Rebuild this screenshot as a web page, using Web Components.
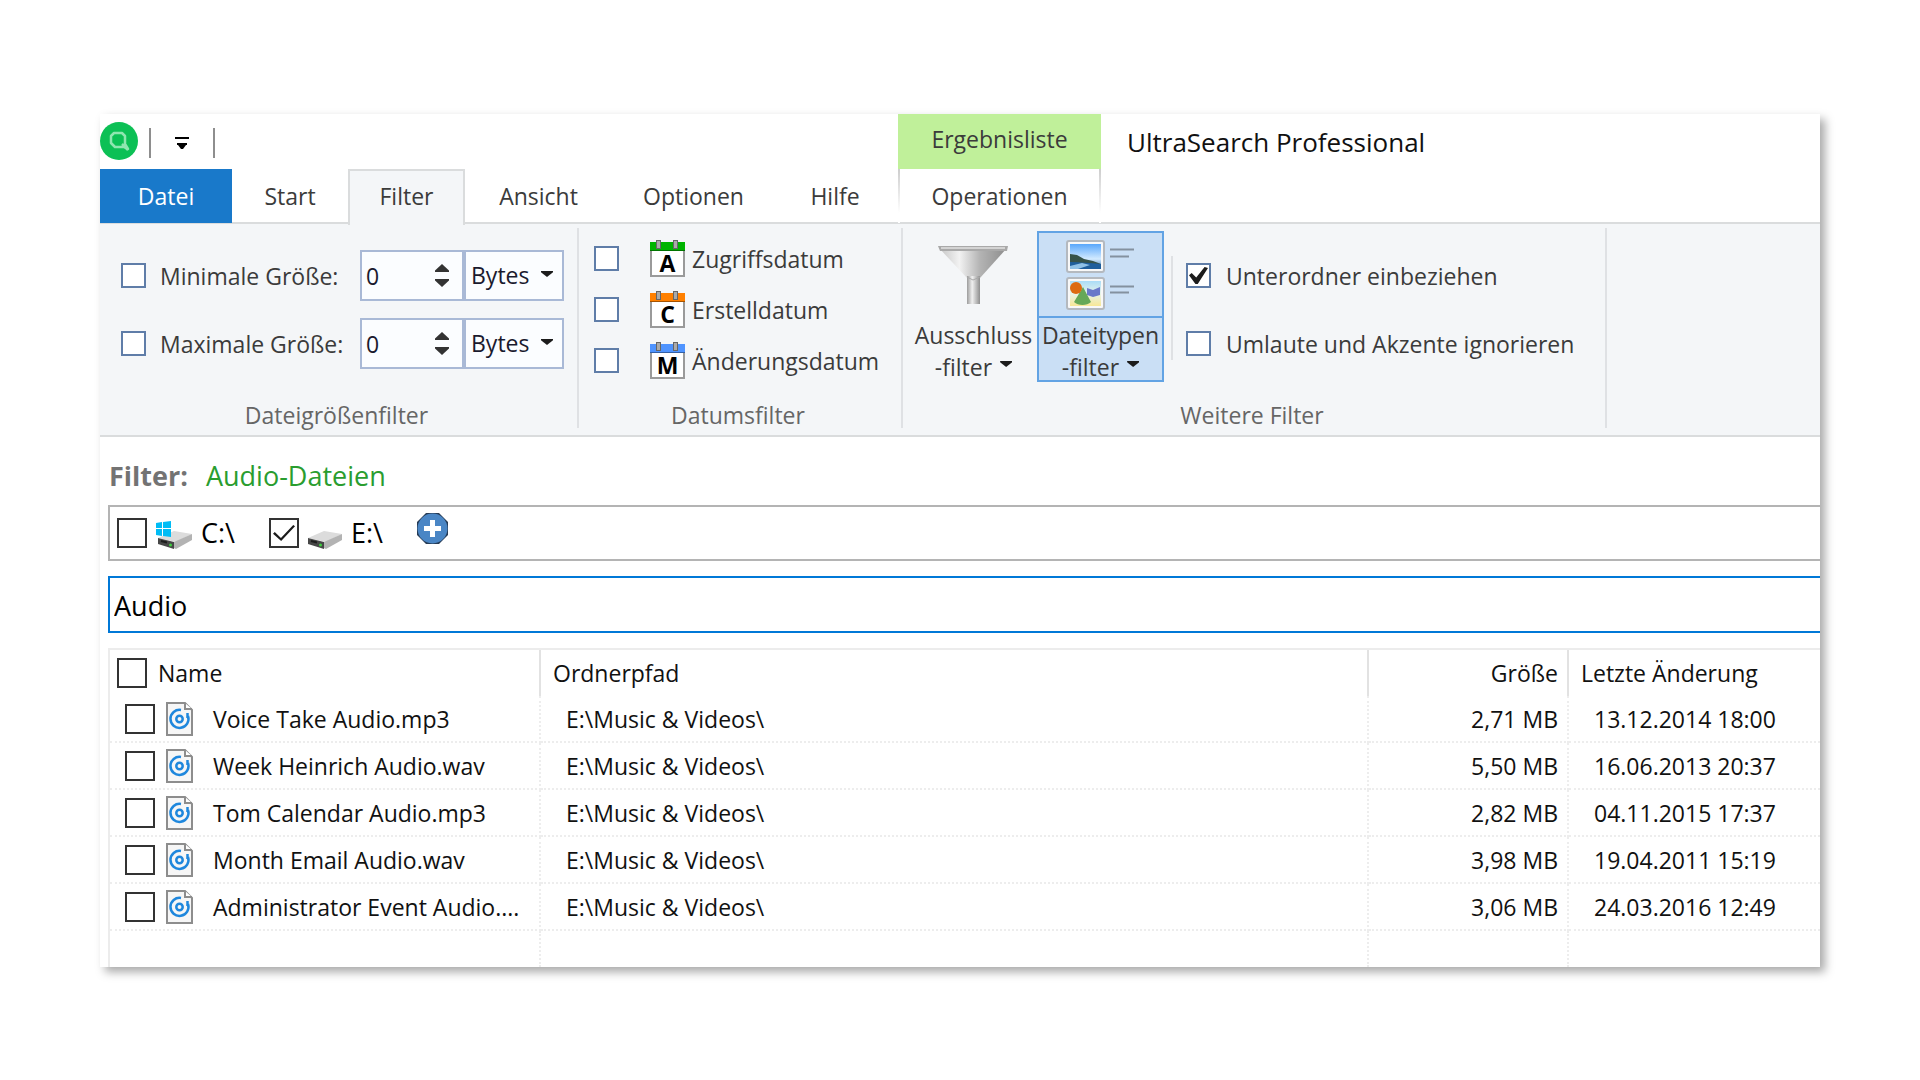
<!DOCTYPE html>
<html lang="de">
<head>
<meta charset="utf-8">
<title>UltraSearch Professional</title>
<style>
	body {
		margin: 0;
		padding: 114px 100px 112px;
		background: #fff;
		font-family: "Open Sans", "Noto Sans", sans-serif;
		font-size: 23px;
		line-height: 32px;
		color: #3b3b3b;
	}
</style>
</head>
<body>

<app-window>
	<title-bar slot="title" context="Ergebnisliste">UltraSearch Professional</title-bar>
	<ribbon-tabs slot="tabs"></ribbon-tabs>

	<ribbon-group caption="Dateigrößenfilter" class="size">
		<size-filter label="Minimale Größe:"></size-filter>
		<size-filter label="Maximale Größe:"></size-filter>
	</ribbon-group>
	<ribbon-group caption="Datumsfilter" class="date">
		<check-option icon="cal-a">Zugriffsdatum</check-option>
		<check-option icon="cal-c">Erstelldatum</check-option>
		<check-option icon="cal-m">Änderungsdatum</check-option>
	</ribbon-group>
	<ribbon-group caption="Weitere Filter" class="more">
		<ribbon-button icon="funnel" first="Ausschluss" second="-filter"></ribbon-button>
		<ribbon-button icon="filetypes" first="Dateitypen" second="-filter" active></ribbon-button>
		<option-list>
			<check-option checked>Unterordner einbeziehen</check-option>
			<check-option>Umlaute und Akzente ignorieren</check-option>
		</option-list>
	</ribbon-group>

	<filter-status slot="content" name="Audio-Dateien"></filter-status>
	<drive-bar slot="content"></drive-bar>
	<search-box slot="content" value="Audio"></search-box>
	<result-table slot="content"></result-table>
</app-window>

<script>
// calendar sheet with a coloured head and a letter
const calendar = (color, letter) => `
	<svg width="37" height="38" viewBox="0 0 37 38" aria-hidden="true">
		<rect x="2" y="3" width="33" height="33" fill="#fff" stroke="#9a9a9a" stroke-width="2"/>
		<rect x="1" y="2" width="35" height="9" fill="${color}"/>
		<path d="M1 10.500h35" stroke="#000" stroke-opacity=".35"/>
		<rect x="7.500" y=".5" width="4" height="8" fill="#aaa" stroke="#666"/>
		<rect x="24.500" y=".5" width="4" height="8" fill="#aaa" stroke="#666"/>
		<text x="18.500" y="32" text-anchor="middle" font-family="Open Sans, sans-serif" font-weight="700" font-size="23" fill="#000">${letter}</text>
	</svg>`

const ICONS = {
	logo: `
	<svg width="38" height="38" viewBox="0 0 38 38" aria-hidden="true">
		<circle cx="19" cy="19" r="19" fill="#0cc055"/>
		<path d="M14 11h8l3 3v8l3 5-4-2h-9l-4-4v-7z" fill="none" stroke="#8fe6b0" stroke-width="2.500" stroke-linejoin="round"/>
		<path d="M22 22l6 6" stroke="#8fe6b0" stroke-width="2.500"/>
	</svg>`,
	'cal-a': calendar('#00b400', 'A'),
	'cal-c': calendar('#ff8000', 'C'),
	'cal-m': calendar('#4f94ff', 'M'),
	funnel: `
	<svg width="70" height="60" viewBox="0 0 70 60" aria-hidden="true">
		<defs>
			<linearGradient id="cone"><stop offset="0" stop-color="#c4c4c4"/><stop offset=".3" stop-color="#f2f2f2"/><stop offset=".6" stop-color="#b4b4b4"/><stop offset="1" stop-color="#8c8c8c"/></linearGradient>
			<linearGradient id="pipe"><stop offset="0" stop-color="#9c9c9c"/><stop offset=".4" stop-color="#f0f0f0"/><stop offset="1" stop-color="#8e8e8e"/></linearGradient>
		</defs>
		<path d="M1 3h68l-27 30H29z" fill="url(#cone)"/>
		<path d="M29 31h13v28H29z" fill="url(#pipe)"/>
		<path d="M29 32l6 3 7-3" fill="none" stroke="#aaa"/>
		<path d="M0 1h70l-1 5H2z" fill="#a9a9a9"/>
		<path d="M3 3h64" stroke="#e2e2e2" stroke-width="1.500"/>
	</svg>`,
	filetypes: `
	<svg width="68" height="70" viewBox="0 0 68 70" aria-hidden="true">
		<defs>
			<linearGradient id="sky" x2="0" y2="1"><stop offset="0" stop-color="#5aa7fb"/><stop offset=".6" stop-color="#d3ebff"/><stop offset="1" stop-color="#2b69a8"/></linearGradient>
			<linearGradient id="sand" x2="0" y2="1"><stop offset="0" stop-color="#aadcf7"/><stop offset=".5" stop-color="#e8f4ea"/><stop offset="1" stop-color="#f8e795"/></linearGradient>
		</defs>
		<rect x="1" y="1" width="37" height="31" rx="2" fill="#f8f8f8" stroke="#b4b9bf" stroke-width="2"/>
		<rect x="4" y="4" width="31" height="25" fill="url(#sky)"/>
		<path d="M4 14l7 1 7 4 9 2 8 3H4z" fill="#36534a"/>
		<path d="M4 22c11 0 20 1 31 2v5H4z" fill="#1f5f9c"/>
		<path d="M4 26l12-3 8 2-12 4H4z" fill="#8fc1e6"/>
		<rect x="1" y="38" width="37" height="31" rx="2" fill="#f8f8f8" stroke="#b4b9bf" stroke-width="2"/>
		<rect x="4" y="41" width="31" height="25" fill="url(#sand)"/>
		<path d="M21 48l6 2 7-3v8l-7 2-6-2z" fill="#6a79c9"/>
		<path d="M17 47l8 15c-4 4-13 4-17 0z" fill="#66a857"/>
		<circle cx="10" cy="48" r="6" fill="#dd6a10"/>
		<path d="M44 9.500h24M44 46.500h24" stroke="#84919f" stroke-width="2"/>
		<path d="M44 16.500h19M44 52.500h19" stroke="#84919f" stroke-width="2"/>
	</svg>`,
	drive: `
	<svg width="36" height="30" viewBox="0 0 36 30" aria-hidden="true">
		<path d="M1 18L17 11l18 3-16 8z" fill="#dcdcdc"/>
		<path d="M17 22l18-8v6l-16 9-2-1z" fill="#b3b3b3"/>
		<path d="M1 18l16 4v7L1 24z" fill="#474747"/>
		<path d="M4 21l6 1.500" stroke="#1d1d1d" stroke-width="2"/>
		<circle cx="13.500" cy="25" r="1.500" fill="#3fd13f"/>
	</svg>`,
	system: `
	<svg width="38" height="30" viewBox="0 0 38 30" aria-hidden="true">
		<path d="M3 18L19 11l18 3-16 8z" fill="#dcdcdc"/>
		<path d="M19 22l18-8v6l-16 9-2-1z" fill="#b3b3b3"/>
		<path d="M3 18l16 4v7L3 24z" fill="#474747"/>
		<path d="M6 21l6 1.500" stroke="#1d1d1d" stroke-width="2"/>
		<circle cx="15.500" cy="25" r="1.500" fill="#3fd13f"/>
		<path d="M1 3l6-1v6H1zM8 2l8-1v7H8zM1 9h6v7l-6-1zM8 9h8v8l-8-1z" fill="#00bcf5"/>
	</svg>`,
	plus: `
	<svg width="31" height="31" viewBox="0 0 31 31" aria-hidden="true">
		<path d="M9 0h13l9 9v13l-9 9H9l-9-9V9z" fill="#263b55"/>
		<circle cx="15.500" cy="15.500" r="15" fill="#4a86c5"/>
		<path d="M15.500 7v17M7 15.500h17" stroke="#fff" stroke-width="5"/>
	</svg>`,
	audio: `
	<svg width="27" height="34" viewBox="0 0 27 34" aria-hidden="true">
		<path d="M1 1h18l7 7v25H1z" fill="#f6f6f6" stroke="#8d8d8d" stroke-width="2"/>
		<path d="M19 1v6h7" fill="#fff" stroke="#8d8d8d" stroke-width="2"/>
		<path d="M22 14a9 9 0 1 1-7-6" fill="none" stroke="#1e87dd" stroke-width="2.500"/>
		<path d="M21.500 11v5" stroke="#1e87dd" stroke-width="2.500"/>
		<circle cx="13.500" cy="17" r="3.200" fill="none" stroke="#1e87dd" stroke-width="2.500"/>
	</svg>`
}

// tick boxes are shared by several shadow roots
const CHECKBOX = `
	input[type=checkbox] {
		appearance: none;
		flex: none;
		display: grid;
		place-items: center;
		box-sizing: border-box;
		width: 25px;
		height: 25px;
		margin: 0;
		border: 2px solid #5f7da8;
		background: #fff;
	}
	input[type=checkbox].large {
		width: 30px;
		height: 30px;
		border-color: #333;
	}
	input:checked::before {
		content: "";
		width: 19px;
		height: 17px;
		background: #1c1c1c;
		clip-path: polygon(0 48%, 14% 36%, 38% 62%, 82% 0, 100% 6%, 46% 100%, 34% 100%);
	}
	input.large:checked::before {
		width: 22px;
		height: 16px;
		clip-path: polygon(0 54%, 8% 44%, 36% 82%, 92% 0, 100% 8%, 37% 100%);
	}`

class AppWindow extends HTMLElement {
	constructor() {
		super();
		this.attachShadow({ mode: 'open' });
		this.shadowRoot.innerHTML = `
		<style>
			:host {
				display: block;
				background: #fff;
				box-shadow: 5px 5px 9px rgba(0,0,0,0.34);
			}
			.ribbon {
				display: flex;
				padding: 4px 0 7px;
				background: #f4f6f8;
				border-bottom: 2px solid #dadcdd;
			}
			main {
				padding-left: 8px;
			}
		</style>
		<slot name="title"></slot>
		<slot name="tabs"></slot>
		<div class="ribbon"><slot></slot></div>
		<main><slot name="content"></slot></main>
		`
	}
}
customElements.define('app-window', AppWindow);

class TitleBar extends HTMLElement {
	constructor() {
		super();
		this.attachShadow({ mode: 'open' });
		this.shadowRoot.innerHTML = `
		<style>
			:host {
				display: flex;
				height: 55px;
			}
			.quick {
				display: flex;
				align-items: center;
				width: 798px;
				height: 53px;
			}
			.quick svg {
				display: block;
			}
			.quick button {
				display: grid;
				place-items: center;
				width: 66px;
				height: 30px;
				margin: 4px 0 0 11px;
				padding: 0;
				border: solid #8e8e8e;
				border-width: 0 2px;
				background: none;
			}
			.context {
				width: 203px;
				line-height: 50px;
				text-align: center;
				background: #c0f09a;
			}
			h1 {
				margin: 0 0 0 26px;
				font-size: 26px;
				font-weight: normal;
				line-height: 56px;
				color: #111;
			}
		</style>
		<div class="quick">
			${ICONS.logo}
			<button aria-label="Schnellzugriff anpassen">
				<svg width="14" height="12" viewBox="0 0 14 12"><path d="M0 0h14v2H0zM2 6h10v2h-1l-3 4H6L3 8H2z"/></svg>
			</button>
		</div>
		<div class="context">${this.getAttribute('context')}</div>
		<h1><slot></slot></h1>
		`
	}
}
customElements.define('title-bar', TitleBar);

class RibbonTabs extends HTMLElement {
	constructor() {
		super();
		this.attachShadow({ mode: 'open' });
		this.shadowRoot.innerHTML = `
		<style>
			:host {
				display: block;
				border-bottom: 2px solid #dadcdd;
			}
			nav {
				display: grid;
				grid-template-columns: 132px 116px 117px 147px 163px 120px 3px 203px;
				height: 53px;
			}
			a {
				color: inherit;
				text-align: center;
				text-decoration: none;
				line-height: 54px;
			}
			.file {
				background: #1979ca;
				color: #fff;
			}
			.current {
				border: 2px solid #dadcdd;
				border-bottom: 0;
				margin-bottom: -2px;
				line-height: 50px;
				background: #f4f6f8;
			}
			.context {
				grid-column: 8;
				border: solid;
				border-width: 0 2px;
				border-image: linear-gradient(#ccc, #fff 80%) 1;
			}
		</style>
		<nav>
			<a href="#datei" class="file">Datei</a>
			<a href="#start">Start</a>
			<a href="#filter" class="current">Filter</a>
			<a href="#ansicht">Ansicht</a>
			<a href="#optionen">Optionen</a>
			<a href="#hilfe">Hilfe</a>
			<a href="#operationen" class="context">Operationen</a>
		</nav>
		`
	}
}
customElements.define('ribbon-tabs', RibbonTabs);

class RibbonGroup extends HTMLElement {
	constructor() {
		super();
		this.attachShadow({ mode: 'open' });
		this.shadowRoot.innerHTML = `
		<style>
			:host {
				display: flex;
				flex-direction: column;
				box-sizing: border-box;
				height: 200px;
				border-right: 2px solid #dfe1e4;
			}
			.body {
				flex: 1;
				display: flex;
				flex-direction: column;
			}
			.caption {
				padding-right: 4px;
				text-align: center;
				line-height: 26px;
				color: #666;
			}
			:host(.size) {
				width: 479px;
			}
			:host(.size) .body {
				gap: 17px;
				padding: 22px 13px 0 21px;
			}
			:host(.date) {
				width: 324px;
			}
			:host(.date) .body {
				padding: 5px 0 0 15px;
			}
			:host(.more) {
				width: 704px;
			}
			:host(.more) .body {
				flex-direction: row;
				align-items: flex-start;
				padding: 3px 0 0 7px;
			}
		</style>
		<div class="body"><slot></slot></div>
		<div class="caption">${this.getAttribute('caption')}</div>
		`
	}
}
customElements.define('ribbon-group', RibbonGroup);

class SizeFilter extends HTMLElement {
	constructor() {
		super();
		this.attachShadow({ mode: 'open' });
		const label = this.getAttribute('label')
		this.shadowRoot.innerHTML = `
		<style>
			${CHECKBOX}
			:host {
				display: flex;
				align-items: center;
				height: 51px;
			}
			label {
				flex: 1;
				display: flex;
				align-items: center;
				gap: 14px;
				white-space: nowrap;
			}
			.spin, .unit {
				position: relative;
				box-sizing: border-box;
				height: 51px;
				border: 2px solid #a9b9d6;
				background: #fbfdff;
			}
			.spin {
				display: flex;
				align-items: center;
				width: 104px;
			}
			.unit {
				width: 100px;
			}
			input[type=number], select {
				appearance: none;
				box-sizing: border-box;
				border: 0;
				margin: 0;
				background: none;
				font: inherit;
				color: #1a1a2e;
			}
			input[type=number] {
				appearance: textfield;
				width: 73px;
				padding: 0 4px;
			}
			.steps {
				display: grid;
				gap: 7px;
			}
			.steps button {
				display: block;
				width: 14px;
				height: 8px;
				padding: 0;
				border: 0;
				background: #333;
				clip-path: polygon(50% 0, 100% 80%, 100% 100%, 0 100%, 0 80%);
			}
			.steps button:last-child {
				clip-path: polygon(50% 100%, 100% 20%, 100% 0, 0 0, 0 20%);
			}
			select {
				width: 100%;
				height: 45px;
				padding: 0 5px;
			}
			.unit::after {
				content: "";
				position: absolute;
				top: 19px;
				right: 9px;
				width: 12px;
				height: 6px;
				background: #1c1c1c;
				clip-path: polygon(0 0, 100% 0, 100% 20%, 50% 100%, 0 20%);
				pointer-events: none;
			}
		</style>
		<label><input type="checkbox">${label}</label>
		<div class="spin">
			<input type="number" value="0" aria-label="${label}">
			<div class="steps">
				<button aria-label="Mehr"></button>
				<button aria-label="Weniger"></button>
			</div>
		</div>
		<div class="unit">
			<select aria-label="Einheit"><option>Bytes</option><option>KB</option><option>MB</option><option>GB</option></select>
		</div>
		`
	}
	connectedCallback() {
		const input = this.shadowRoot.querySelector('input[type=number]')
		const [up, down] = this.shadowRoot.querySelectorAll('.steps button')
		up.addEventListener('click', () => input.stepUp());
		down.addEventListener('click', () => input.stepDown());
	}
}
customElements.define('size-filter', SizeFilter);

class CheckOption extends HTMLElement {
	constructor() {
		super();
		this.attachShadow({ mode: 'open' });
		const icon = this.getAttribute('icon')
		this.shadowRoot.innerHTML = `
		<style>
			${CHECKBOX}
			:host {
				display: block;
			}
			label {
				display: flex;
				align-items: center;
				height: 51px;
				gap: 15px;
				white-space: nowrap;
			}
			:host([icon]) label {
				gap: 6px;
			}
			svg {
				margin-left: 24px;
			}
		</style>
		<label><input type="checkbox" ${this.hasAttribute('checked') ? 'checked' : ''}>${icon ? ICONS[icon] : ''}<slot></slot></label>
		`
	}
}
customElements.define('check-option', CheckOption);

class OptionList extends HTMLElement {
	constructor() {
		super();
		this.attachShadow({ mode: 'open' });
		this.shadowRoot.innerHTML = `
		<style>
			:host {
				display: grid;
				gap: 17px;
				margin: 19px 0 0 7px;
				padding-left: 15px;
				background: linear-gradient(#dfe1e4, #dfe1e4) 0 6px / 2px 104px no-repeat;
			}
		</style>
		<slot></slot>
		`
	}
}
customElements.define('option-list', OptionList);

class RibbonButton extends HTMLElement {
	constructor() {
		super();
		this.attachShadow({ mode: 'open' });
		this.shadowRoot.innerHTML = `
		<style>
			:host {
				display: block;
			}
			button {
				display: block;
				box-sizing: border-box;
				width: 127px;
				height: 151px;
				padding: 0;
				border: 2px solid transparent;
				background: none;
				font: inherit;
				color: inherit;
				white-space: nowrap;
			}
			.icon {
				display: grid;
				place-items: center;
				height: 83px;
				padding-right: 2px;
				border-bottom: 2px solid transparent;
			}
			.text {
				display: block;
				margin: 0 -4px;
				padding-top: 1px;
			}
			i {
				display: inline-block;
				width: 12px;
				height: 6px;
				margin: 0 0 9px 8px;
				background: #1c1c1c;
				clip-path: polygon(0 0, 100% 0, 100% 20%, 50% 100%, 0 20%);
			}
			:host([active]) button {
				border-color: #62a3e4;
				background: #cadff5;
			}
			:host([active]) .icon {
				border-color: #62a3e4;
			}
		</style>
		<button>
			<span class="icon">${ICONS[this.getAttribute('icon')]}</span>
			<span class="text">${this.getAttribute('first')}<br>${this.getAttribute('second')}<i></i></span>
		</button>
		`
	}
}
customElements.define('ribbon-button', RibbonButton);

class FilterStatus extends HTMLElement {
	constructor() {
		super();
		this.attachShadow({ mode: 'open' });
		this.shadowRoot.innerHTML = `
		<style>
			:host {
				display: flex;
				gap: 18px;
				padding: 19px 1px 9px;
				font-size: 27px;
				line-height: 40px;
				color: #2a9d2f;
			}
			b {
				color: #737373;
			}
		</style>
		<b>Filter:</b><span>${this.getAttribute('name')}</span>
		`
	}
}
customElements.define('filter-status', FilterStatus);

class DriveBar extends HTMLElement {
	constructor() {
		super();
		this.attachShadow({ mode: 'open' });
		this.shadowRoot.innerHTML = `
		<style>
			${CHECKBOX}
			:host {
				display: flex;
				align-items: center;
				gap: 34px;
				height: 52px;
				padding-left: 7px;
				border: 2px solid #b4b4b4;
				border-right: 0;
				font-size: 27px;
				color: #000;
			}
			label {
				display: flex;
				align-items: center;
				gap: 8px;
			}
			label svg {
				margin-top: 4px;
			}
			button {
				display: block;
				height: 31px;
				margin-bottom: 10px;
				padding: 0;
				border: 0;
				background: none;
			}
			button svg {
				display: block;
			}
		</style>
		<label><input type="checkbox" class="large">${ICONS.system}C:\\</label>
		<label><input type="checkbox" class="large" checked>${ICONS.drive}E:\\</label>
		<button aria-label="Hinzufügen">${ICONS.plus}</button>
		`
	}
}
customElements.define('drive-bar', DriveBar);

class SearchBox extends HTMLElement {
	constructor() {
		super();
		this.attachShadow({ mode: 'open' });
		this.shadowRoot.innerHTML = `
		<style>
			:host {
				display: block;
				padding: 15px 0;
			}
			input {
				display: block;
				box-sizing: border-box;
				width: 100%;
				height: 57px;
				padding: 1px 4px 0;
				border: 2px solid #0078d7;
				border-right: 0;
				border-radius: 0;
				outline: 0;
				font: inherit;
				font-size: 27px;
				color: #000;
			}
		</style>
		<input type="text" aria-label="Suche" value="${this.getAttribute('value')}">
		`
	}
}
customElements.define('search-box', SearchBox);

const FILES = [
	['Voice Take Audio.mp3', '2,71 MB', '13.12.2014 18:00'],
	['Week Heinrich Audio.wav', '5,50 MB', '16.06.2013 20:37'],
	['Tom Calendar Audio.mp3', '2,82 MB', '04.11.2015 17:37'],
	['Month Email Audio.wav', '3,98 MB', '19.04.2011 15:19'],
	['Administrator Event Audio....', '3,06 MB', '24.03.2016 12:49']
]

class ResultTable extends HTMLElement {
	constructor() {
		super();
		this.attachShadow({ mode: 'open' });
		const rows = FILES.map(([name, size, date]) => `
			<tr>
				<td><label><input type="checkbox" class="large">${ICONS.audio}<span>${name}</span></label></td>
				<td>E:\\Music &amp; Videos\\</td>
				<td>${size}</td>
				<td>${date}</td>
			</tr>`).join('')
		this.shadowRoot.innerHTML = `
		<style>
			${CHECKBOX}
			:host {
				display: block;
				border: solid #ececec;
				border-width: 2px 0 0 2px;
				color: #111;
			}
			table {
				width: 100%;
				table-layout: fixed;
				border-spacing: 0;
				white-space: nowrap;
			}
			th, td {
				box-sizing: border-box;
				padding: 0 0 0 25px;
				text-align: left;
				font-weight: normal;
			}
			th {
				height: 46px;
				padding-left: 12px;
				border-right: 2px solid #e2e2e2;
			}
			td {
				height: 47px;
				border-right: 2px dotted #ededed;
				border-bottom: 2px dotted #ededed;
			}
			.rest td {
				height: 36px;
				border-bottom: 0;
			}
			th:first-child {
				padding-left: 7px;
			}
			td:first-child {
				padding-left: 15px;
			}
			th:nth-child(3), td:nth-child(3) {
				padding-right: 9px;
				text-align: right;
			}
			th:last-child, td:last-child {
				border-right: 0;
			}
			label {
				display: flex;
				align-items: center;
				gap: 11px;
			}
			td label span {
				padding-left: 9px;
			}
		</style>
		<table>
			<colgroup><col style="width: 431px"><col><col style="width: 200px"><col style="width: 251px"></colgroup>
			<thead>
				<tr>
					<th><label><input type="checkbox" class="large">Name</label></th>
					<th>Ordnerpfad</th>
					<th>Größe</th>
					<th>Letzte Änderung</th>
				</tr>
			</thead>
			<tbody>
				${rows}
				<tr class="rest"><td></td><td></td><td></td><td></td></tr>
			</tbody>
		</table>
		`
	}
}
customElements.define('result-table', ResultTable);
</script>
</body>
</html>
